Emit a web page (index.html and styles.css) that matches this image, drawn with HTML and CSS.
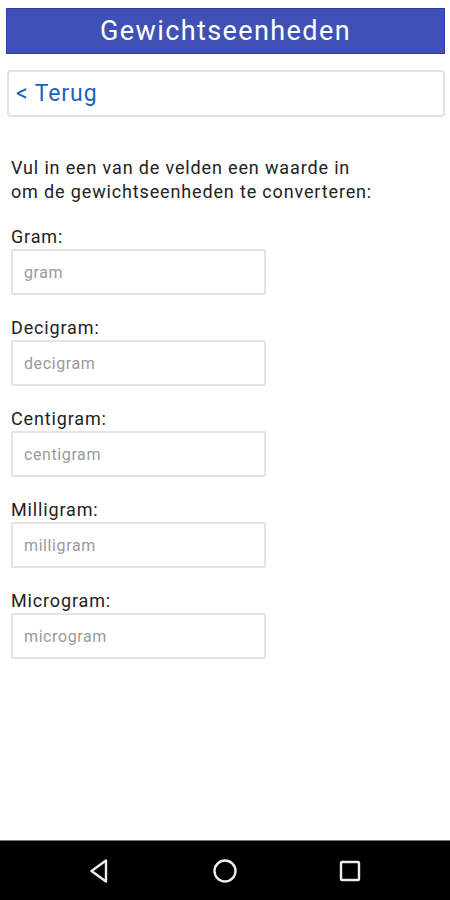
FILE: index.html
```html
<!DOCTYPE html>
<html lang="nl">
<head>
<meta charset="utf-8">
<title>Gewichtseenheden</title>
<link rel="stylesheet" href="styles.css">
</head>
<body>
<div class="screen">
  <main class="content">
    <header class="titlebar">Gewichtseenheden</header>
    <button class="back">&lt; Terug</button>
    <p class="intro">Vul in een van de velden een waarde in<br>om de gewichtseenheden te converteren:</p>
    <div class="fields">
      <div class="field">
        <label class="label">Gram:</label>
        <input class="input" type="text" placeholder="gram">
      </div>
      <div class="field">
        <label class="label">Decigram:</label>
        <input class="input" type="text" placeholder="decigram">
      </div>
      <div class="field">
        <label class="label">Centigram:</label>
        <input class="input" type="text" placeholder="centigram">
      </div>
      <div class="field">
        <label class="label">Milligram:</label>
        <input class="input" type="text" placeholder="milligram">
      </div>
      <div class="field">
        <label class="label">Microgram:</label>
        <input class="input" type="text" placeholder="microgram">
      </div>
    </div>
  </main>
  <nav class="navbar">
    <svg class="nav-icon" width="24" height="26" viewBox="0 0 24 26"><path d="M18 2.5 L3.5 13 L18 23.5 Z" fill="none" stroke="#eee" stroke-width="2.4" stroke-linejoin="round"/></svg>
    <svg class="nav-icon" width="26" height="26" viewBox="0 0 26 26"><circle cx="13" cy="13" r="10.5" fill="none" stroke="#eee" stroke-width="2.4"/></svg>
    <svg class="nav-icon" width="24" height="24" viewBox="0 0 24 24"><rect x="3" y="3" width="18" height="18" rx="1" fill="none" stroke="#eee" stroke-width="2.4"/></svg>
  </nav>
</div>
</body>
</html>
```
FILE: styles.css
```css
* { box-sizing: border-box; }
html, body { margin: 0; padding: 0; background: #fff; }
body { font-family: Roboto, "Liberation Sans", sans-serif; }
.screen {
  width: 450px;
  height: 900px;
  display: flex;
  flex-direction: column;
}
.content {
  flex: 1;
  padding: 8px 5px 0 6px;
  display: flex;
  flex-direction: column;
}
.titlebar {
  height: 46px;
  background: #3f51b5;
  border: 1px solid #2c3ea6;
  color: #fff;
  font-size: 27px;
  letter-spacing: 1.4px;
  line-height: 44px;
  text-align: center;
}
.back {
  margin: 16px 0 0 1px;
  height: 47px;
  background: #fff;
  border: 2px solid #e2e2e2;
  border-radius: 4px;
  text-align: left;
  padding: 0 0 0 7px;
  font-family: Roboto, "Liberation Sans", sans-serif;
  font-size: 23px;
  letter-spacing: 0.9px;
  color: #1d5fbf;
}
.intro {
  margin: 39px 0 0 5px;
  font-size: 18px;
  letter-spacing: 0.85px;
  line-height: 24px;
  color: #222;
}
.fields {
  margin: 21px 0 0 5px;
  display: flex;
  flex-direction: column;
  gap: 21px;
}
.field {
  display: flex;
  flex-direction: column;
}
.label {
  font-size: 18px;
  letter-spacing: 0.85px;
  line-height: 24px;
  color: #222;
}
.input {
  width: 255px;
  height: 46px;
  border: 2px solid #e4e4e4;
  border-radius: 2px;
  padding: 0 0 0 11px;
  font-family: Roboto, "Liberation Sans", sans-serif;
  font-size: 16px;
  letter-spacing: 0.6px;
  color: #333;
  outline: none;
}
.input::placeholder { color: #9a9a9a; }
.navbar {
  height: 60px;
  background: #000;
  border-top: 1px solid #777;
  display: flex;
  align-items: center;
  justify-content: center;
  gap: 100px;
}
.nav-icon { display: block; }
```
